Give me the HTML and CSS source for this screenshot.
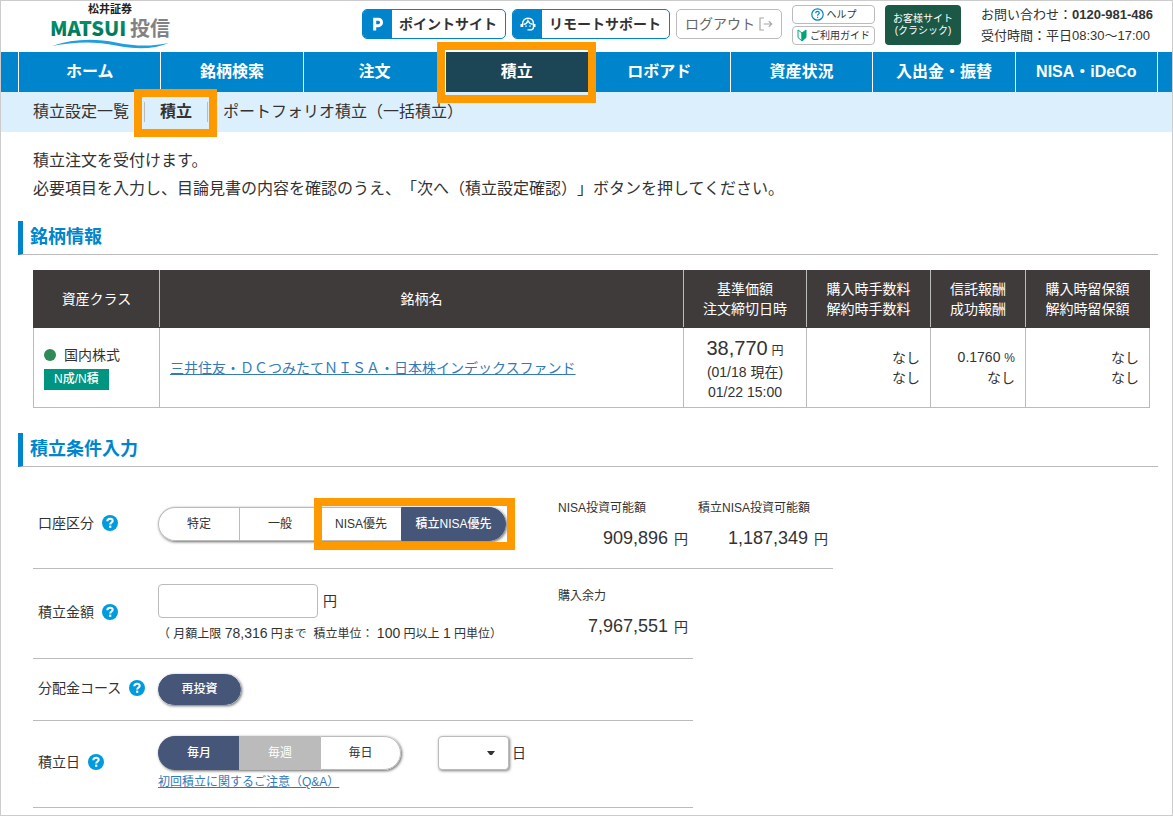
FILE: index.html
```html
<!DOCTYPE html>
<html lang="ja">
<head>
<meta charset="utf-8">
<title>積立 | 松井証券 投信</title>
<link rel="stylesheet" href="styles.css">
</head>
<body>
<svg class="defs" aria-hidden="true">
  <symbol id="q" viewBox="0 0 16 16">
    <circle cx="8" cy="8" r="8" fill="#009bdf"/>
    <path d="M5.300 6.200C5.300 4.400 6.500 3.700 8.100 3.700S10.700 4.500 10.700 5.900C10.700 7.500 8.200 7.600 8.200 9.500" fill="none" stroke="#fff" stroke-width="2"/>
    <rect x="7.100" y="10.600" width="2.200" height="2.200" fill="#fff"/>
  </symbol>
</svg>

<header class="header">
  <a class="logo" href="#" aria-label="松井証券 投信">
    <svg width="120" height="48" viewBox="0 -2 120 48">
      <defs>
        <linearGradient id="green" x1="0" y1="0" x2="0" y2="1">
          <stop offset="0" stop-color="#00a37c"/><stop offset="1" stop-color="#00694f"/>
        </linearGradient>
      </defs>
      <text class="logo-company" x="38" y="10">松井証券</text>
      <text class="logo-name" x="0" y="33" fill="url(#green)">MATSUI</text>
      <text class="logo-fund" x="80" y="33">投信</text>
      <path d="M2 43C22 36 44 35 66 39.500C88 44 104 43 119 40C104 46 88 47 66 42.500C44 38 24 39 2 43Z" fill="#1f9fdf"/>
    </svg>
  </a>
  <div class="tools">
    <div class="buttons">
      <button class="service" type="button">
        <span class="service-icon"><svg width="12" height="14" viewBox="0 0 12 14"><path d="M2.700 13.500V2.200H6.300A3.200 3.200 0 0 1 6.300 8.700H2.700" fill="none" stroke="#fff" stroke-width="3"/></svg></span>
        <span class="service-text">ポイントサイト</span>
      </button>
      <button class="service" type="button">
        <span class="service-icon"><svg width="16" height="14" viewBox="0 0 16 14" fill="none" stroke="#fff" stroke-width="1.400"><path d="M2.500 10V7C2.500 3.200 5 1.200 8 1.200S13.500 3.200 13.500 7V10.500C13.500 12.300 12 12.900 10 12.900H7.500"/><path d="M1.400 7V10M14.600 7V10" stroke-width="1.800"/><path d="M3.500 7.400C6.500 7 7.500 5.500 8 3.800C9 6 10.300 7 12.700 7.200" /><path d="M6 8.500V9.800M10 8.500V9.800"/></svg></span>
        <span class="service-text">リモートサポート</span>
      </button>
      <button class="logout" type="button">ログアウト<svg width="14" height="14" viewBox="0 0 14 14" fill="none" stroke="#aaa" stroke-width="1.200"><path d="M5 1H1V13H5"/><path d="M4.500 7H12.500M9.800 4.200L12.700 7L9.800 9.800"/></svg></button>
    </div>
    <div class="guides">
      <button class="guide" type="button"><svg width="13" height="13" viewBox="0 0 13 13"><circle cx="6.500" cy="6.500" r="5.700" fill="#fff" stroke="#0085cc" stroke-width="1.200"/><path d="M4.700 5.200C4.700 4 5.500 3.400 6.500 3.400S8.300 4 8.300 5C8.300 6.100 6.600 6.200 6.600 7.700M6.600 8.800V9.900" fill="none" stroke="#0085cc" stroke-width="1.200"/></svg>ヘルプ</button>
      <button class="guide" type="button"><svg width="10" height="13" viewBox="0 0 10 13"><path d="M1 1L5 4V12L1 8.500Z" fill="#fff" stroke="#00a37c"/><path d="M9 1L5 4V12L9 8.500Z" fill="#00a37c" stroke="#00a37c"/></svg>ご利用ガイド</button>
    </div>
    <button class="classic" type="button">お客様サイト<br>(クラシック)</button>
    <p class="contact">お問い合わせ：<b>0120-981-486</b><br>受付時間：平日08:30～17:00</p>
  </div>
</header>

<nav class="nav">
  <a href="#">ホーム</a>
  <a href="#">銘柄検索</a>
  <a href="#">注文</a>
  <a href="#" class="current">積立<span class="mark mark-nav"></span></a>
  <a href="#">ロボアド</a>
  <a href="#">資産状況</a>
  <a href="#">入出金・振替</a>
  <a href="#">NISA・iDeCo</a>
</nav>
<nav class="subnav">
  <a href="#">積立設定一覧</a>
  <a href="#" class="current">積立<span class="mark mark-sub"></span></a>
  <a href="#">ポートフォリオ積立（一括積立）</a>
</nav>

<main class="main">
  <p class="lead">積立注文を受付けます。<br>必要項目を入力し、目論見書の内容を確認のうえ、「次へ（積立設定確認）」ボタンを押してください。</p>

  <h2 class="heading">銘柄情報</h2>
  <table class="fund">
    <colgroup><col class="c-class"><col><col class="c-price"><col class="c-wide"><col class="c-fee"><col class="c-wide"></colgroup>
    <thead>
      <tr>
        <th>資産クラス</th>
        <th>銘柄名</th>
        <th>基準価額<br>注文締切日時</th>
        <th>購入時手数料<br>解約時手数料</th>
        <th>信託報酬<br>成功報酬</th>
        <th>購入時留保額<br>解約時留保額</th>
      </tr>
    </thead>
    <tbody>
      <tr>
        <td><span class="asset">国内株式</span><span class="badge">N成/N積</span></td>
        <td><a href="#">三井住友・ＤＣつみたてＮＩＳＡ・日本株インデックスファンド</a></td>
        <td class="price"><span class="amount">38,770</span> <small>円</small><br>(01/18 現在)<br>01/22 15:00</td>
        <td class="num">なし<br>なし</td>
        <td class="num">0.1760 <small>%</small><br>なし</td>
        <td class="num">なし<br>なし</td>
      </tr>
    </tbody>
  </table>

  <h2 class="heading">積立条件入力</h2>
  <form class="form">
    <div class="row row-account">
      <div class="label"><span>口座区分</span><svg class="help"><use href="#q"/></svg></div>
      <div class="control">
        <div class="seg" role="radiogroup" aria-label="口座区分">
          <label><input type="radio" name="account"><span>特定</span></label>
          <label><input type="radio" name="account"><span>一般</span></label>
          <label><input type="radio" name="account"><span>NISA優先</span></label>
          <label class="long"><input type="radio" name="account" checked><span>積立NISA優先</span></label>
          <i class="mark mark-seg"></i>
        </div>
      </div>
      <dl class="limit"><dt>NISA投資可能額</dt><dd><b>909,896</b> 円</dd></dl>
      <dl class="limit"><dt>積立NISA投資可能額</dt><dd><b>1,187,349</b> 円</dd></dl>
    </div>
    <div class="row row-amount">
      <div class="label"><label for="amount">積立金額</label><svg class="help"><use href="#q"/></svg></div>
      <div class="control">
        <div class="line"><input class="text" id="amount" type="text">円</div>
        <p class="note">（ 月額上限 <span>78,316</span> 円まで &nbsp;積立単位： <span>100</span> 円以上 <span>1</span> 円単位）</p>
      </div>
      <dl class="limit"><dt>購入余力</dt><dd><b>7,967,551</b> 円</dd></dl>
    </div>
    <div class="row">
      <div class="label"><span>分配金コース</span><svg class="help"><use href="#q"/></svg></div>
      <div class="control">
        <div class="seg seg-single" role="radiogroup" aria-label="分配金コース">
          <label><input type="radio" name="course" checked><span>再投資</span></label>
        </div>
      </div>
    </div>
    <div class="row">
      <div class="label"><span>積立日</span><svg class="help"><use href="#q"/></svg></div>
      <div class="control">
        <div class="line">
          <div class="seg" role="radiogroup" aria-label="積立日">
            <label><input type="radio" name="cycle" checked><span>毎月</span></label>
            <label><input type="radio" name="cycle" disabled><span>毎週</span></label>
            <label><input type="radio" name="cycle"><span>毎日</span></label>
          </div>
          <div class="day">
            <div class="select"><select id="day"><option></option><option>1</option><option>15</option></select><svg width="8" height="4" viewBox="0 0 8 4"><path d="M0 0H8L5 4H3Z" fill="#333"/></svg></div>
            <label for="day">日</label>
          </div>
        </div>
        <a class="qa" href="#">初回積立に関するご注意（Q&amp;A）</a>
      </div>
    </div>
  </form>
</main>
</body>
</html>
```
FILE: styles.css
```css
* { box-sizing: border-box; }

body {
  margin: 0;
  min-height: 100vh;
  border: 1px solid #ccc;
  background: #fff;
  color: #333;
  font-family: "Liberation Sans", "Noto Sans CJK JP", sans-serif;
  font-size: 14px;
  line-height: 20px;
  text-spacing-trim: space-all;
}

p, dl, dd, h2 { margin: 0; }
a { color: #337ab7; }
button, input, select { font: inherit; color: inherit; }
button { padding: 0; cursor: pointer; }
.defs { display: none; }

.mark {
  position: absolute;
  border: 8px solid #f90;
  pointer-events: none;
  z-index: 2;
}

/* header */
.header {
  display: flex;
  justify-content: space-between;
  height: 51px;
  padding: 0 19px 3px 49px;
}
.logo svg { display: block; overflow: visible; }
.logo-company { font: bold 11px "Noto Sans CJK JP", sans-serif; fill: #222; }
.logo-name { font: 900 20px "Noto Sans CJK JP", sans-serif; }
.logo-fund { font: bold 20px "Noto Sans CJK JP", sans-serif; fill: #808285; }

.tools { display: flex; align-items: center; gap: 10px; }
.buttons { display: flex; gap: 6px; padding-bottom: 2px; }
.service {
  display: flex;
  height: 30px;
  border: 1px solid #0085cc;
  border-radius: 5px;
  background: #fff;
  overflow: hidden;
}
.service-icon {
  display: flex;
  align-items: center;
  justify-content: center;
  width: 29px;
  height: 28px;
  background: #0085cc;
}
.service-text { padding: 0 8px 0 7px; font-weight: bold; line-height: 28px; }
.logout {
  display: flex;
  align-items: center;
  gap: 4px;
  height: 30px;
  padding: 0 8px;
  border: 1px solid #bbb;
  border-radius: 5px;
  background: #fff;
  color: #666;
}
.guides { display: grid; gap: 2px; }
.guide {
  display: flex;
  align-items: center;
  justify-content: center;
  gap: 3px;
  width: 83px;
  height: 19px;
  border: 1px solid #bbb;
  border-radius: 4px;
  background: #fff;
  font-size: 10px;
  line-height: 17px;
}
.classic {
  width: 76px;
  height: 40px;
  border: 0;
  border-radius: 4px;
  background: #1b5846;
  color: #fff;
  font-size: 10px;
  line-height: 12px;
}
.contact { margin-left: 10px; font-size: 13px; line-height: 21px; white-space: nowrap; }

/* navigation */
.nav {
  display: flex;
  padding: 0 14px 0 17px;
  background: #0085cc;
}
.nav a {
  position: relative;
  flex: 1;
  border-left: 1px solid #fff;
  color: #fff;
  font-size: 16px;
  font-weight: bold;
  line-height: 40px;
  text-align: center;
  text-decoration: none;
}
.nav a:last-child { border-right: 1px solid #fff; }
.nav .current { background: #1c4555; }
.mark-nav { inset: -10px -8px -11px -9px; }

.subnav {
  display: flex;
  align-items: center;
  height: 40px;
  padding: 0 32px;
  background: #dceffd;
  font-size: 16px;
}
.subnav a { color: #333; text-decoration: none; }
.subnav .current {
  position: relative;
  margin: 0 15px;
  padding: 0 15px;
  border: solid #bbb;
  border-width: 0 1px;
  font-weight: bold;
}
.mark-sub { inset: -13px -10px -15px -11px; }

/* content */
.main { padding: 15px 14px 7px 17px; }
.lead { padding: 0 15px; font-size: 16px; line-height: 28px; }
.heading {
  margin-top: 18px;
  padding: 1px 7px 2px;
  border-bottom: 1px solid #bbb;
  border-left: 5px solid #0085cc;
  color: #0085cc;
  font-size: 18px;
  line-height: 30px;
}

.fund {
  width: calc(100% - 23px);
  margin: 15px 8px 25px 15px;
  border-collapse: collapse;
  table-layout: fixed;
}
.c-class { width: 126px; }
.c-price { width: 123px; }
.c-wide { width: 124px; }
.c-fee { width: 95px; }
.fund th {
  height: 57px;
  padding: 0;
  border: 1px solid #403b3b;
  border-left-color: #bbb;
  border-right-color: #bbb;
  background: #403b3b;
  color: #fff;
  font-weight: normal;
}
.fund th:first-child { border-left-color: #403b3b; }
.fund th:last-child { border-right-color: #403b3b; }
.fund td { height: 80px; padding: 0 10px; border: 1px solid #bbb; border-top: 0; }
.fund small { font-size: 12px; }
.fund .price { text-align: center; padding: 0; }
.fund .num { text-align: right; }
.amount { font-size: 20px; line-height: 28px; }
.asset { display: flex; align-items: center; gap: 8px; }
.asset::before { content: ""; width: 12px; height: 12px; border-radius: 50%; background: #2e8b57; }
.badge {
  display: inline-block;
  margin-top: 4px;
  padding: 0 10px 1px;
  background: #009580;
  color: #fff;
  font-size: 12px;
  font-weight: 500;
  vertical-align: top;
}

/* form */
.form { padding: 0 15px; }
.row {
  display: grid;
  grid-template-columns: 125px 400px 130px;
  align-items: center;
  max-width: 660px;
  padding: 15px 0;
  border-bottom: 1px solid #bbb;
}
.row-account {
  grid-template-columns: 125px 400px 130px 140px;
  max-width: 800px;
  padding: 29px 0 19px;
}
.row-amount { padding-bottom: 14px; }
.limit + .limit { padding-left: 10px; }
.label { display: flex; align-items: center; gap: 8px; padding: 0 0 4px 5px; }
.row-account .label { padding-bottom: 0; }
.row-account .control { padding-top: 2px; }
.help { width: 16px; height: 16px; }
.line { display: flex; align-items: center; gap: 5px; }
.text {
  width: 160px;
  height: 34px;
  padding: 0 8px;
  border: 1px solid #bbb;
  border-radius: 4px;
  background: #fff;
}
.note { margin-top: 5px; font-size: 12px; white-space: nowrap; }
.note span { font-size: 14px; }
.limit { align-self: start; padding-top: 2px; }
.limit dt { font-size: 12px; }
.limit dd { margin-top: 10px; text-align: right; }
.limit b { margin-right: 2px; font-size: 18px; font-weight: normal; }

.seg {
  position: relative;
  display: inline-flex;
  vertical-align: top;
  height: 34px;
  border-radius: 17px;
  box-shadow: 1px 1px 3px rgba(0, 0, 0, .6);
  font-size: 12px;
}
.seg label { position: relative; display: block; width: 81px; }
.seg .long { width: 105px; }
.seg input { position: absolute; inset: 0; margin: 0; opacity: 0; }
.seg span {
  display: block;
  height: 100%;
  border: 1px solid #bbb;
  border-right-width: 0;
  background: #fff;
  line-height: 32px;
  text-align: center;
}
.seg label:first-child span { border-radius: 17px 0 0 17px; }
.seg label:last-of-type span { border-radius: 0 17px 17px 0; border-right-width: 1px; }
.seg input:checked + span { border-color: #465678; background: #465678; color: #fff; font-weight: 500; }
.seg input:disabled + span { border-color: #bbb; background: #bbb; color: #fff; }
.mark-seg { inset: -9px -9px -9px 156px; }
.seg-single { height: 31px; }
.seg-single label { width: 83px; }
.seg-single label:last-of-type span { border-radius: 17px; line-height: 29px; }

.day { display: flex; align-items: center; gap: 3px; margin-left: 32px; }
.select { position: relative; display: flex; }
.select select {
  width: 71px;
  height: 34px;
  padding: 0 8px;
  border: 1px solid #bbb;
  border-radius: 4px;
  background: #fff;
  box-shadow: 1px 1px 3px rgba(0, 0, 0, .5);
  appearance: none;
}
.select svg { position: absolute; right: 14px; top: 15px; pointer-events: none; }
.qa { display: block; width: max-content; margin-top: 2px; font-size: 12px; }
```
